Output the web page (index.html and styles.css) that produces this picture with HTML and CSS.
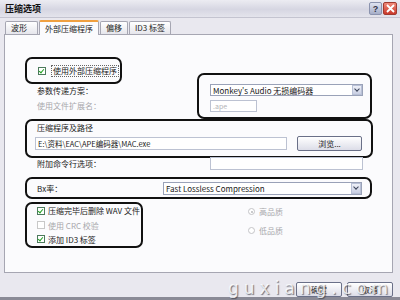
FILE: index.html
```html
<!DOCTYPE html>
<html lang="zh-CN">
<head>
  <meta charset="UTF-8">
  <title>压缩选项</title>
  <link rel="stylesheet" href="styles.css">
</head>
<body>
  <div class="window">
    <!-- Title bar -->
    <div class="titlebar">
      <span class="title">压缩选项</span>
      <span class="tb-btn help">?</span>
      <span class="tb-btn close">
        <svg width="9" height="9" viewBox="0 0 9 9"><path d="M1 1L8 8M8 1L1 8" stroke="#fff" stroke-width="1.8"/></svg>
      </span>
    </div>

    <div class="frame">
      <!-- Tabs -->
      <div class="tabs">
        <span class="tab">波形</span>
        <span class="tab active">外部压缩程序</span>
        <span class="tab">偏移</span>
        <span class="tab">ID3 标签</span>
      </div>

      <!-- Tab page -->
      <div class="panel">
        <div class="ring ring-use">
          <span class="check on"></span>
          <span class="focus">使用外部压缩程序</span>
        </div>

        <div class="row-params">
          <div class="labels">
            <span>参数传递方案：</span>
            <span class="dim">使用文件扩展名：</span>
          </div>
          <div class="ring ring-scheme">
            <div class="select wide">
              <span class="value">Monkey's Audio 无损编码器</span>
              <span class="arrow"></span>
            </div>
            <div class="input ext">.ape</div>
          </div>
        </div>

        <div class="ring ring-path">
          <div class="caption">压缩程序及路径</div>
          <div class="path-row">
            <div class="input path">E:\资料\EAC\APE编码器\MAC.exe</div>
            <span class="button browse">浏览...</span>
          </div>
        </div>

        <div class="row-extra">
          <span class="label-col">附加命令行选项：</span>
          <div class="input extra"></div>
        </div>

        <div class="ring ring-rate">
          <span class="label-col narrow">Bx率：</span>
          <div class="select rate">
            <span class="value">Fast Lossless Compression</span>
            <span class="arrow"></span>
          </div>
        </div>

        <div class="row-bottom">
          <div class="ring ring-opts">
            <div class="opt"><span class="check on"></span>压缩完毕后删除 WAV 文件</div>
            <div class="opt dim"><span class="check off"></span>使用 CRC 校验</div>
            <div class="opt"><span class="check on"></span>添加 ID3 标签</div>
          </div>
          <div class="radios">
            <div class="opt dim"><span class="radio sel"></span>高品质</div>
            <div class="opt dim"><span class="radio"></span>低品质</div>
          </div>
        </div>
      </div>

      <!-- Dialog buttons -->
      <div class="footer">
        <span class="button">确定</span>
        <span class="button">取消</span>
        <span class="watermark">guxiang.com</span>
      </div>
    </div>
  </div>
</body>
</html>
```

FILE: styles.css
```css
/* Windows XP style dialog, scaled down */
body {
  margin: 0;
  width: 400px;
  height: 300px;
  overflow: hidden;
  font-family: "Liberation Sans", "Noto Sans CJK SC", sans-serif;
  font-size: 8px;
  color: #1a1a1a;
}

.window {
  width: 400px;
  height: 300px;
  background: #e9e8ef;
  display: flex;
  flex-direction: column;
  box-sizing: border-box;
  border-bottom: 3px solid #8a8a96;
}

.titlebar {
  height: 17px;
  display: flex;
  align-items: center;
  padding: 0 3px 0 5px;
  background: linear-gradient(#ececf2, #d6d6e2 55%, #e4e4ec);
  border-bottom: 1px solid #c4c4d0;
}

.title {
  flex: 1;
  font-weight: bold;
  font-size: 9px;
  font-family: "Noto Sans CJK SC", sans-serif;
  color: #111;
}

.tb-btn {
  width: 13px;
  height: 13px;
  box-sizing: border-box;
  border-radius: 2px;
  display: flex;
  align-items: center;
  justify-content: center;
}

.help {
  background: linear-gradient(#dfe3f0, #a6aec8);
  border: 1px solid #8b93ae;
  color: #334;
  font-size: 9px;
  font-weight: bold;
  margin-right: 1px;
}

.close {
  width: 14px;
  background: linear-gradient(#f08a7a, #c9382a);
  border: 1px solid #a03a30;
}

.frame {
  flex: 1;
  display: flex;
  flex-direction: column;
  padding: 3px 7px 0 4px;
}

.tabs {
  display: flex;
  align-items: flex-end;
  height: 13px;
  padding-left: 1px;
  font-family: "Noto Sans CJK SC", sans-serif;
}

.tab {
  height: 12px;
  line-height: 12px;
  padding: 0 5px;
  margin-right: 1px;
  border: 1px solid #a6a6b2;
  border-bottom: none;
  border-radius: 2px 2px 0 0;
  background: linear-gradient(#ffffff, #e6e6ec);
  font-size: 8px;
  color: #222;
}

.tab:first-child { width: 21px; }

.tab.active {
  height: 13px;
  line-height: 13px;
  background: #fbfbfd;
  border-top: 2px solid #f0a040;
  position: relative;
  top: 1px;
  padding: 0 5px;
}

.panel {
  height: 239px;
  box-sizing: border-box;
  background: #fbfbfd;
  border: 1px solid #a6a6b2;
  padding: 0 0 0 20px;
  display: flex;
  flex-direction: column;
  align-items: flex-start;
  font-family: "Noto Sans CJK SC", sans-serif;
}

/* black rounded annotation rings */
.ring {
  border: 2px solid #111;
  border-radius: 7px;
  box-sizing: border-box;
}

.ring-use {
  margin-top: 22px;
  width: 97px;
  height: 27px;
  display: flex;
  align-items: center;
  padding-left: 11px;
}

.focus {
  border: 1px dotted #666;
  padding: 0 1px;
  line-height: 10px;
  margin-left: 2px;
}

.check {
  width: 8px;
  height: 8px;
  box-sizing: border-box;
  border: 1px solid #4c7a5c;
  background: #fff;
  margin-right: 3px;
  flex-shrink: 0;
  position: relative;
}

.check.on::after {
  content: "";
  position: absolute;
  left: 1px;
  top: 0;
  width: 2px;
  height: 4px;
  border: solid #21a121;
  border-width: 0 1.5px 1.5px 0;
  transform: rotate(40deg);
}

.check.off {
  border-color: #c8c8c8;
}

.row-params {
  display: flex;
  height: 35px;
}

.labels {
  width: 172px;
  padding: 1px 0 0 12px;
  box-sizing: border-box;
  display: flex;
  flex-direction: column;
  gap: 3px;
  line-height: 12px;
}

.dim {
  color: #a8a8ac;
}

.ring-scheme {
  margin-top: -11px;
  width: 175px;
  height: 46px;
  padding: 9px 0 0 11px;
}

.select {
  height: 12px;
  box-sizing: border-box;
  border: 1px solid #9aa2b8;
  background: #fff;
  display: flex;
  align-items: center;
  font-size: 8px;
}

.select .value {
  flex: 1;
  padding-left: 2px;
  white-space: nowrap;
  overflow: hidden;
}

.arrow {
  width: 10px;
  height: 100%;
  box-sizing: border-box;
  border: 1px solid #b8c0d6;
  background: linear-gradient(#eef0f8, #c8cee2);
  position: relative;
}

.arrow::after {
  content: "";
  position: absolute;
  left: 2px;
  top: 1px;
  width: 3px;
  height: 3px;
  border: solid #3a4258;
  border-width: 0 1.5px 1.5px 0;
  transform: rotate(45deg);
}

.wide {
  width: 153px;
}

.input {
  height: 13px;
  box-sizing: border-box;
  border: 1px solid #bcc2d2;
  background: #fff;
  line-height: 11px;
  padding-left: 2px;
  white-space: nowrap;
}

.ext {
  width: 47px;
  height: 12px;
  margin-top: 4px;
  color: #b4b4b8;
  font-size: 7px;
}

.ring-path {
  width: 348px;
  height: 39px;
  padding: 1px 0 0 8px;
}

.caption {
  padding-left: 2px;
  line-height: 12px;
}

.path-row {
  display: flex;
  align-items: center;
  margin-top: 2px;
}

.path {
  width: 252px;
  font-size: 7.5px;
}

.button {
  box-sizing: border-box;
  height: 15px;
  border: 1px solid #6a7088;
  border-radius: 2px;
  background: linear-gradient(#ffffff, #dcdde8);
  display: flex;
  align-items: center;
  justify-content: center;
  font-size: 8px;
}

.browse {
  width: 65px;
  margin-left: 10px;
}

.row-extra {
  display: flex;
  align-items: center;
  margin-top: -1px;
  height: 13px;
}

.label-col {
  width: 185px;
  padding-left: 12px;
  box-sizing: border-box;
}

.extra {
  width: 153px;
}

.ring-rate {
  margin-top: 7px;
  width: 347px;
  height: 22px;
  display: flex;
  align-items: center;
}

.label-col.narrow {
  width: 136px;
  padding-left: 10px;
}

.rate {
  width: 199px;
  height: 13px;
}

.row-bottom {
  display: flex;
  margin-top: 3px;
}

.ring-opts {
  width: 118px;
  height: 46px;
  padding: 0 0 0 10px;
  display: flex;
  flex-direction: column;
}

.opt {
  display: flex;
  align-items: center;
  height: 14px;
  white-space: nowrap;
}

.ring-opts .opt:nth-child(2) {
  height: 15px;
}

.radios {
  margin-left: 105px;
  display: flex;
  flex-direction: column;
  padding-top: 0;
}

.radios .opt {
  height: 19px;
}

.radio {
  width: 7px;
  height: 7px;
  box-sizing: border-box;
  border: 1px solid #c4c4c8;
  border-radius: 50%;
  background: #fff;
  margin-right: 4px;
  position: relative;
}

.radio.sel::after {
  content: "";
  position: absolute;
  left: 1.5px;
  top: 1.5px;
  width: 2px;
  height: 2px;
  border-radius: 50%;
  background: #b8b8bc;
}

.footer {
  flex: 1;
  display: flex;
  justify-content: flex-end;
  align-items: flex-start;
  gap: 5px;
  padding-top: 9px;
  position: relative;
  font-family: "Noto Sans CJK SC", sans-serif;
}

.footer .button {
  width: 46px;
}

.watermark {
  position: absolute;
  left: 224px;
  top: 5px;
  font-family: "DejaVu Sans", sans-serif;
  font-size: 17px;
  letter-spacing: 5px;
  color: rgba(255, 255, 255, 0.8);
  text-shadow: 1px 1px 1px rgba(60, 60, 70, 0.7);
}
```
